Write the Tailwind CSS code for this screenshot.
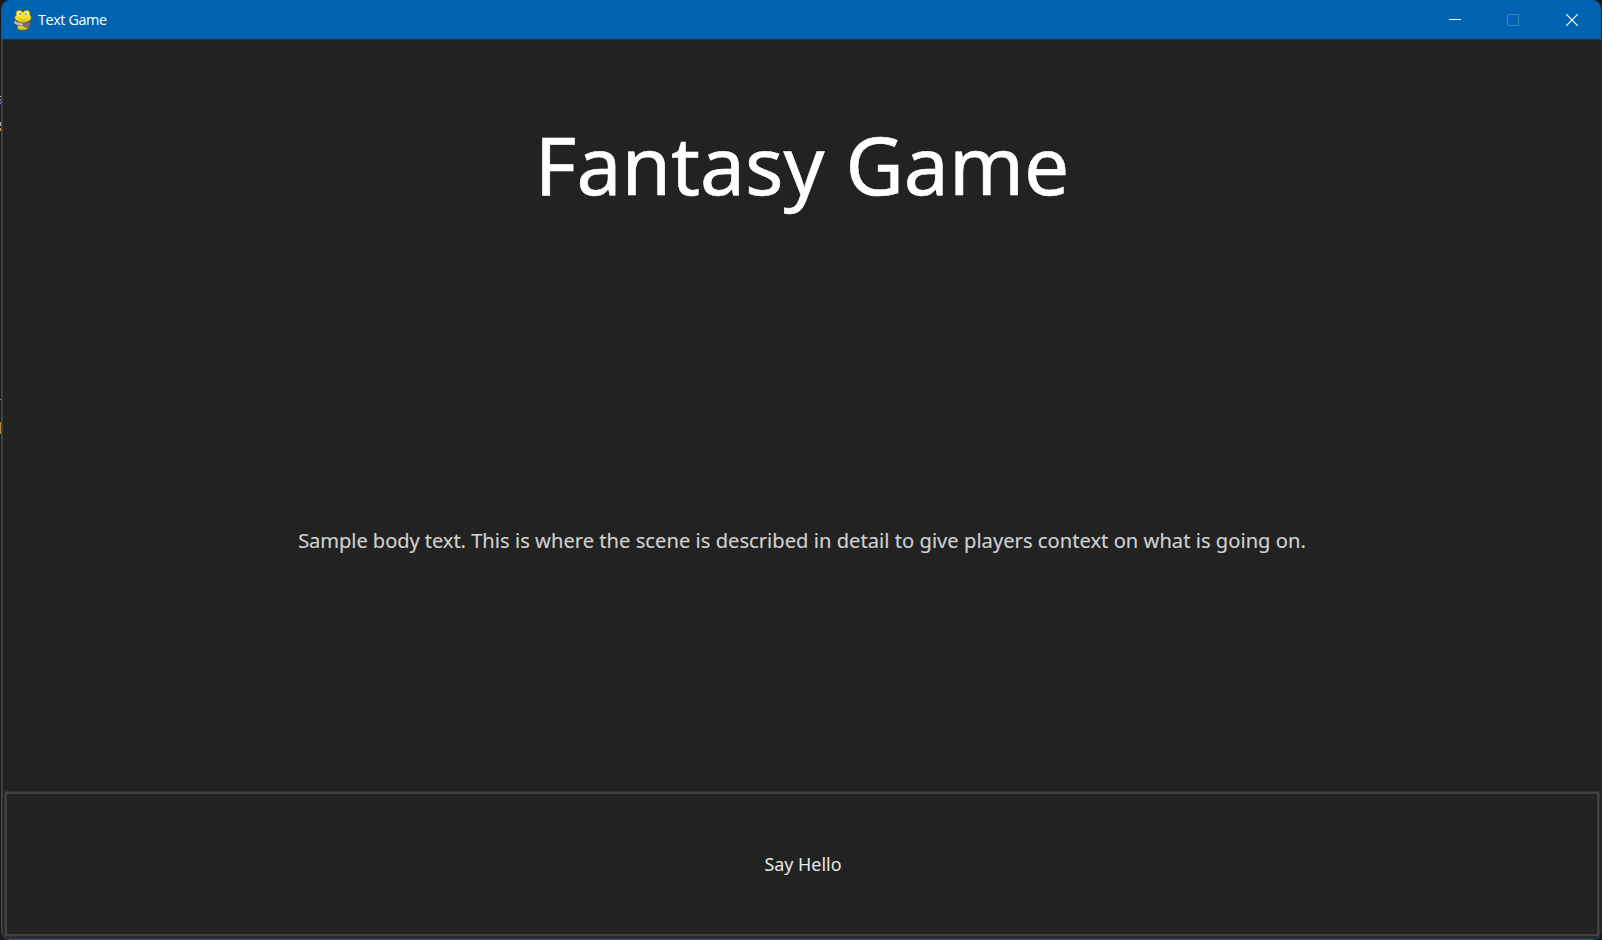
<!DOCTYPE html>
<html lang="en">
<head>
<meta charset="utf-8">
<title>Text Game</title>
<script src="https://cdn.jsdelivr.net/npm/@tailwindcss/browser@4"></script>
</head>
<body class="w-[1602px] h-[940px] overflow-hidden bg-[#191919] relative font-['Noto_Sans',sans-serif]">
<!-- slivers of the window behind -->
<div class="absolute left-0 top-[96px] w-px h-px bg-[#aaa]"></div>
<div class="absolute left-0 top-[99px] w-px h-[2px] bg-[#5a8a98]"></div>
<div class="absolute left-0 top-[102px] w-px h-[2px] bg-[#7668c0]"></div>
<div class="absolute left-0 top-[122px] w-px h-[4px] bg-[#9cb9c4]"></div>
<div class="absolute left-0 top-[128px] w-px h-[3px] bg-[#c09050]"></div>
<div class="absolute left-0 top-[399px] w-px h-px bg-[#888]"></div>
<div class="absolute left-0 top-[422px] w-px h-[12px] bg-[#b98642]"></div>
<main class="relative ml-px w-[1601px] h-[940px] rounded-[9px] border border-t-0 border-[#0b5799] border-r-[#292929] bg-[#222] overflow-hidden flex flex-col">
  <header class="h-[39px] shrink-0 bg-[#0063b1] flex items-center text-white">
    <svg class="ml-[11px] w-[20px] h-[22px]" viewBox="0 0 20 22">
      <path d="M4.500 12.500h10l2 3-1 4-3.500 1.500H6l-2-2 1-2z" fill="#e3cd20" stroke="#6b611f" stroke-width=".7"/>
      <path d="M3 3 4.500 1.200h3.300L9.500 3h1L12 1.200h3.300L17 3.500v2.300l1.500 2.400-1 2.800-3.500 2H6.500l-4-2L1.500 8.500 3 6z" fill="#f5e228" stroke="#6b611f" stroke-width=".7"/>
      <circle cx="6.500" cy="4.500" r="1.900" fill="#fffbc8"/><circle cx="13.300" cy="4.500" r="1.900" fill="#fffbc8"/>
      <path d="M6.300 4h1.200v1.500H6.300zM12.300 4h1.200v1.500h-1.200z" fill="#2a2a20"/>
      <path d="M4.500 9.800q5.500 2 11 0" stroke="#b3a21c" stroke-width=".7" fill="none"/>
      <path d="M1 12h2l1.300 1.500 6 1v2.200l-6-.5L1.200 14.500z" fill="#c8c8cc" stroke="#55555c" stroke-width=".5"/>
      <path d="M10.500 14.500 16 12.500l2 2-1.500 3.500-3.500.5-2.500-1.500z" fill="#77727a" stroke="#444048" stroke-width=".5"/>
      <path d="M14.500 14H16v1.200h-1.500z" fill="#b0584c"/>
    </svg>
    <h1 class="ml-[5px] text-[14.400px] leading-[20px] tracking-[-0.4px] font-['Open_Sans',sans-serif]">Text Game</h1>
    <div class="ml-auto flex h-full">
      <div class="w-[58px] flex items-center justify-center"><svg class="w-3 h-3" viewBox="0 0 12 12"><path d="M0 5.500h12" stroke="#fff"/></svg></div>
      <div class="w-[58px] flex items-center justify-center"><svg class="w-3 h-3" viewBox="0 0 12 12"><rect x=".5" y=".5" width="11" height="11" rx=".5" fill="none" stroke="#3d88c6"/></svg></div>
      <div class="w-[59px] flex items-center justify-center"><svg class="w-3 h-3" viewBox="0 0 12 12"><path d="M.3.3 11.700 11.700M11.700.3.3 11.700" stroke="#fff" stroke-width="1.200"/></svg></div>
    </div>
  </header>
  <div class="grow min-h-0 border border-t-[#28323c] border-[#393939] border-r-0 flex flex-col">
    <section class="h-[251px] pt-[70px] text-center text-[80.300px] leading-[109px] text-white whitespace-nowrap [-webkit-text-stroke:0.6px_#fff]"><h2>Fantasy Game</h2></section>
    <section class="h-[501px] pt-[235px] text-center text-[20.130px] leading-[28px] text-[#d0d0d0] whitespace-nowrap [-webkit-text-stroke:0.150px_#d0d0d0]"><p><span class="tracking-[-0.080px]">Sample body text.</span> <span class="tracking-[0.030px]">This is where the scene is described in detail to give players context on what is going on.</span></p></section>
    <button class="ml-[2px] mr-[2px] h-[144px] shrink-0 border-2 border-[#424242] shadow-[0_0_0_1px_#303030] text-[17.900px] leading-[24px] text-[#e8e8e8] pl-[2px]">Say Hello</button>
  </div>
</main>
</body>
</html>
